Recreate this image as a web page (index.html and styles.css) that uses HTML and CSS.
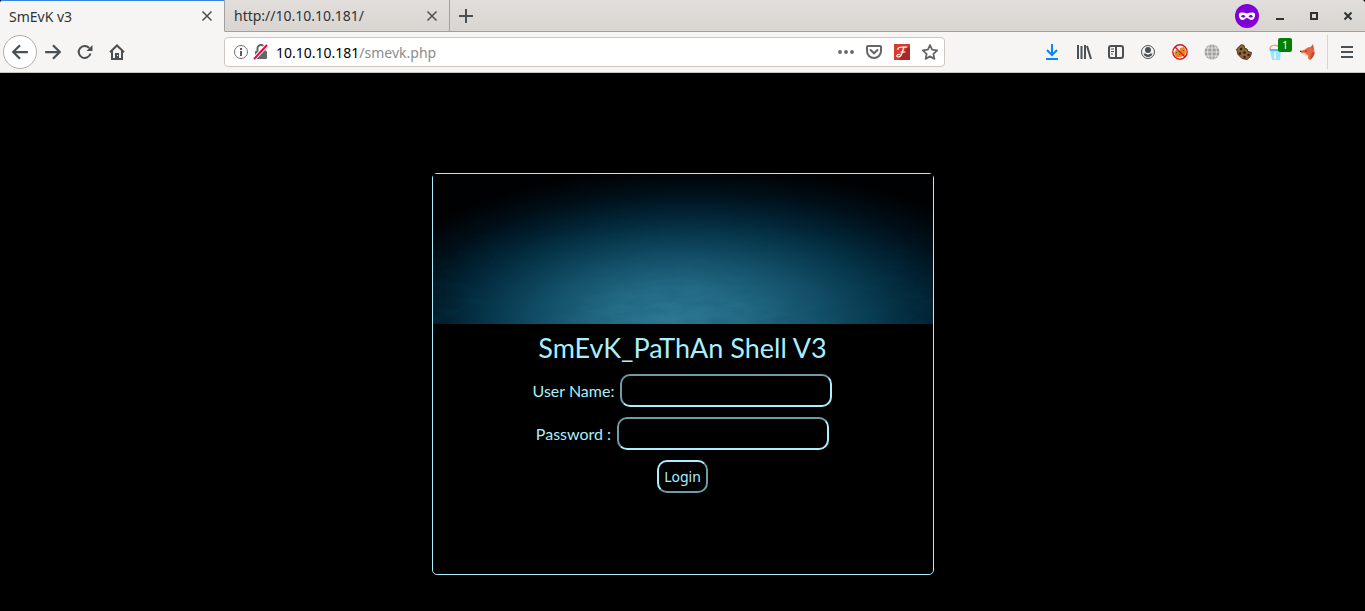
FILE: index.html
```html
<!DOCTYPE html>
<html lang="en">
<head>
<meta charset="utf-8">
<title>SmEvK v3</title>
<link rel="stylesheet" href="styles.css">
</head>
<body>
<header class="browser">
  <div class="tabbar">
    <div class="tab tab-active">
      <span class="tab-title">SmEvK v3</span>
      <button class="tab-close" aria-label="Close tab"><svg width="16" height="16" viewBox="0 0 16 16"><path d="M3.500 3.500l9 9M12.500 3.500l-9 9"/></svg></button>
    </div>
    <div class="tab">
      <span class="tab-title">http://10.10.10.181/</span>
      <button class="tab-close" aria-label="Close tab"><svg width="16" height="16" viewBox="0 0 16 16"><path d="M3.500 3.500l9 9M12.500 3.500l-9 9"/></svg></button>
    </div>
    <button class="new-tab" aria-label="New tab"><svg width="16" height="16" viewBox="0 0 16 16"><path d="M8 1v14M1 8h14"/></svg></button>
    <div class="window-controls">
      <svg class="mask" width="24" height="24" viewBox="0 0 24 24"><circle cx="12" cy="12" r="12" fill="#8000d7"/><path fill="#fff" fill-rule="evenodd" d="M4 9.500C5 8 9 8 12 9.500 15 8 19 8 20 9.500 20.500 13 19 16 16.500 16 14.500 16 13.500 14 12 14S9.500 16 7.500 16C5 16 3.500 13 4 9.500ZM6 12.500C7 14 9.500 14 10.500 12.500 9.500 10.500 7 10.500 6 12.500ZM13.500 12.500C14.500 14 17 14 18 12.500 17 10.500 14.500 10.500 13.500 12.500Z"/></svg>
      <button aria-label="Minimize"><svg width="16" height="16" viewBox="0 0 16 16"><path d="M4 11h8"/></svg></button>
      <button aria-label="Maximize"><svg width="16" height="16" viewBox="0 0 16 16"><path d="M5 5h6v6H5z"/></svg></button>
      <button aria-label="Close window"><svg width="16" height="16" viewBox="0 0 16 16"><path d="M4.500 4.500l7 7M11.500 4.500l-7 7"/></svg></button>
    </div>
  </div>
  <div class="toolbar">
    <nav class="nav-buttons">
      <button class="back" aria-label="Back"><svg width="18" height="18" viewBox="0 0 16 16"><path d="M15 8H2M8 2L2 8l6 6"/></svg></button>
      <button aria-label="Forward"><svg width="18" height="18" viewBox="0 0 16 16"><path d="M1 8h13M8 2l6 6-6 6"/></svg></button>
      <button aria-label="Reload"><svg width="16" height="16" viewBox="0 0 16 16"><path d="M13.500 9.500A6 6 0 1 1 12.200 4"/><path class="solid" d="M15.500 1v6h-6z"/></svg></button>
      <button aria-label="Home"><svg width="16" height="16" viewBox="0 0 16 16"><path d="M1 8.200L8 1.500l7 6.700M3 7v8h10V7"/><path class="solid" fill-rule="evenodd" d="M6 15V9h4v6zM8 11v1h1v-1z"/></svg></button>
    </nav>
    <div class="urlbar">
      <svg width="16" height="16" viewBox="0 0 16 16"><circle cx="8" cy="8" r="6.500" fill="none" stroke="#737373"/><path fill="#5a5a5a" d="M7 4h2v2H7zM7 7h2v5H7z"/></svg>
      <svg width="16" height="16" viewBox="0 0 16 16"><path d="M4.500 7V4.500a3.500 3.500 0 0 1 7 0V7" fill="none" stroke="#666" stroke-width="2"/><rect x="2" y="7" width="12" height="8" rx="1" fill="#666"/><path d="M1 15L14 1" stroke="#fff" stroke-width="4"/><path d="M1 15L14 1" stroke="#ff0039" stroke-width="2"/></svg>
      <span class="url"><span class="host">10.10.10.181</span>/smevk.php</span>
      <div class="page-actions">
        <button aria-label="Page actions"><svg width="16" height="16" viewBox="0 0 16 16"><g fill="#666"><circle cx="2" cy="8" r="1.900"/><circle cx="8" cy="8" r="1.900"/><circle cx="14" cy="8" r="1.900"/></g></svg></button>
        <button aria-label="Save to Pocket"><svg width="16" height="16" viewBox="0 0 16 16" fill="none" stroke="#666" stroke-width="2"><path d="M2 2h12a1 1 0 0 1 1 1v4A7 7 0 0 1 1 7V3a1 1 0 0 1 1-1Z"/><path d="M4.500 6L8 9.300 11.500 6" stroke-linecap="round"/></svg></button>
        <button aria-label="Flash"><svg width="16" height="16" viewBox="0 0 16 16"><path fill="#d63b31" d="M0 0h16v16H0z"/><path fill="#a82a28" d="M14 2l2 2v12H5z"/><path d="M4 6C3 2 8 3.500 13.500 3M10 3C8 8 8 13 4.500 13S3.500 9.500 6 10.500M6.500 8h5" fill="none" stroke="#fff" stroke-width="1.200"/></svg></button>
        <button aria-label="Bookmark"><svg width="16" height="16" viewBox="0 0 16 16"><path d="M8 1l2.100 4.700 5.100.6-3.800 3.500 1 5.100L8 12.400l-4.400 2.500 1-5.100L.8 6.300l5.100-.6z" fill="none" stroke="#666" stroke-width="1.800" stroke-linejoin="round"/></svg></button>
      </div>
    </div>
    <div class="extensions">
      <button aria-label="Downloads"><svg width="16" height="16" viewBox="0 0 16 16" fill="none" stroke="#0a84ff" stroke-width="2"><path d="M8 0v11M3 6l5 5 5-5M2 15h12"/></svg></button>
      <button aria-label="Library"><svg width="16" height="16" viewBox="0 0 16 16" fill="none" stroke="#4a5053" stroke-width="2"><path d="M2 1v14M5.500 2v13M9 1v14M11 2l4 13"/></svg></button>
      <button aria-label="Sidebars"><svg width="16" height="16" viewBox="0 0 16 16" fill="none" stroke="#4a5053" stroke-width="2"><rect x="1" y="2" width="14" height="12" rx="2"/><path d="M8 2v12"/><path d="M3 5h3M3 7.500h3M3 10h2" stroke-width="1"/></svg></button>
      <button aria-label="Account"><svg width="16" height="16" viewBox="0 0 16 16"><circle cx="8" cy="8" r="6.500" fill="none" stroke="#4a5053"/><circle cx="8" cy="6" r="3" fill="#4a5053"/><path fill="#4a5053" d="M3.500 9.500h2C7 11 9 11 10.500 9.500h2C12 14 4 14 3.500 9.500Z"/></svg></button>
      <button aria-label="Cookie blocker"><svg width="16" height="16" viewBox="0 0 16 16"><path fill="#e98620" d="M2 9l2-3 4 1 0-3 4-1 2 4-1 4-4 2-5 0z"/><path fill="#7a4616" d="M7 10h1v1H7zM4 8h1v1H4zM11 6h1v1h-1z"/><circle cx="8" cy="8" r="7.200" fill="none" stroke="#d4191c" stroke-width="1.400"/><path d="M3 3l10 10" stroke="#d4191c" stroke-width="1.400"/></svg></button>
      <button aria-label="Proxy"><svg width="16" height="16" viewBox="0 0 16 16"><circle cx="8" cy="8" r="7.500" fill="#9e9e9e"/><path d="M8 0v16M0 8h16M1.500 4h13M1.500 12h13M5.500 1C3 5 3 11 5.500 15M10.500 1c2.500 4 2.500 10 0 14" fill="none" stroke="#eee" stroke-width=".8"/></svg></button>
      <button aria-label="Cookie manager"><svg width="16" height="16" viewBox="0 0 16 16"><path fill="#8f6437" stroke="#503719" d="M5 .8l3 .5.500 3L11 5l1 2.500 3.500 1-1 4-3.500 3-5-1-4-4L.6 5z"/><g fill="#30200f"><circle cx="5" cy="5" r="1.300"/><circle cx="4" cy="9.500" r="1.300"/><circle cx="8.500" cy="8.500" r="1.300"/><circle cx="8.500" cy="13" r="1.200"/><circle cx="12.500" cy="11" r="1.200"/></g></svg></button>
      <button class="bucket" aria-label="Cleaner, 1"><svg width="16" height="16" viewBox="0 0 16 16"><path d="M2 6C2 0 10 0 12 5" fill="none" stroke="#e6a68a" stroke-width="1.500"/><path fill="#9ce4fb" d="M2 6h11l-1 10H4z"/><path fill="#50bce9" d="M2 5h11v2H2z"/><path fill="#d5f5ff" d="M6 8h2v7H6z"/></svg><span class="badge">1</span></button>
      <button aria-label="Fox extension"><svg width="16" height="16" viewBox="0 0 16 16"><path fill="#e8653f" d="M.5 7L5 5.500 7.500 3.500 10.500 3 13 0l1 5 .8 4-1.800 4-3 3-2-1.500.3-3L4.500 11 1 9z"/><path fill="#f7d9cc" d="M1 8.500l4 .5 2.500 2-4-.3z"/><path fill="#c04a2f" d="M11.500 3.500L12.700 1.800 13 5zM12 8l2.500 1-1.500 4-3 3z"/><path fill="#38231e" d="M0 6.800h1.300v1.300H0zM5.500 6.500h1.200v1H5.500z"/></svg></button>
      <button class="menu" aria-label="Menu"><svg width="16" height="16" viewBox="0 0 16 16" stroke="#4a5053" stroke-width="2"><path d="M2 3h12M2 8h12M2 13h12"/></svg></button>
    </div>
  </div>
</header>
<main class="page">
  <form class="login">
    <svg class="banner" viewBox="0 0 500 150" preserveAspectRatio="none" aria-hidden="true">
      <defs>
        <radialGradient id="glow" gradientUnits="userSpaceOnUse" cx="0" cy="0" r="1" fx="-.08" fy="0" gradientTransform="translate(265 145) scale(345 152)">
          <stop offset="0" stop-color="#2e7893"/><stop offset=".2" stop-color="#246b86"/><stop offset=".4" stop-color="#145069"/><stop offset=".56" stop-color="#08384d"/><stop offset=".7" stop-color="#022233"/><stop offset=".84" stop-color="#000f18"/><stop offset="1" stop-color="#000102"/>
        </radialGradient>
        <filter id="grain" x="0" y="0" width="100%" height="100%"><feTurbulence type="fractalNoise" baseFrequency=".04 .12" numOctaves="4" seed="4"/><feColorMatrix values="0 0 0 0 0  0 0 0 0 .08  0 0 0 0 .12  .9 0 0 0 -.36"/></filter>
        <linearGradient id="fade" x1="0" y1="0" x2="0" y2="1"><stop offset=".3" stop-color="#000"/><stop offset="1" stop-color="#fff"/></linearGradient>
        <mask id="floor"><rect width="500" height="150" fill="url(#fade)"/></mask>
      </defs>
      <rect width="500" height="150" fill="url(#glow)"/>
      <g mask="url(#floor)"><rect width="500" height="150" filter="url(#grain)" opacity=".5"/></g>
    </svg>
    <h1>SmEvK_PaThAn Shell V3</h1>
    <div class="field"><label for="user">User Name:</label><input id="user" type="text"></div>
    <div class="field"><label for="pass">Password :</label><input id="pass" type="password"></div>
    <button class="submit" type="submit">Login</button>
  </form>
</main>
</body>
</html>
```
FILE: styles.css
```css
* { box-sizing: border-box; }
body {
  margin: 0;
  min-height: 100vh;
  display: flex;
  flex-direction: column;
  background: #000;
  font-family: "Noto Sans", sans-serif;
  font-size: 14px;
}
button {
  display: flex;
  align-items: center;
  justify-content: center;
  padding: 0;
  border: 0;
  background: none;
  font: inherit;
}
svg { display: block; flex: none; }

.browser { color: #2e3436; background: #f6f5f4; border-bottom: 1px solid #c9c5c0; border-radius: 4px 4px 0 0; }
.tabbar {
  display: flex;
  height: 32px;
  background: linear-gradient(#e1dedb, #d9d5d1);
  border-radius: 4px 4px 0 0;
  border-bottom: 1px solid #a3a09c;
}
.tab {
  display: flex;
  align-items: center;
  justify-content: space-between;
  width: 225px;
  height: 32px;
  padding: 0 9px;
  border-right: 1px solid #a3a09c;
  border-bottom: 1px solid #a3a09c;
}
.tab-active {
  background: #f6f5f4;
  border-top: 1px solid #3584e4;
  border-bottom-color: #f6f5f4;
  border-radius: 3px 0 0 0;
}
.tab-close svg, .new-tab svg { fill: none; stroke: #4a5053; stroke-width: 2; }
.tab-close svg { stroke-width: 1.5; }
.new-tab { width: 32px; height: 31px; }
.window-controls { display: flex; align-items: center; gap: 18px; margin-left: auto; padding-right: 9px; }
.window-controls svg { fill: none; stroke: #2e3436; stroke-width: 2; }
.window-controls .mask { margin-right: -5px; stroke: none; }

.toolbar { display: flex; align-items: center; height: 40px; }
.nav-buttons { display: flex; align-items: center; width: 224px; padding-left: 3px; }
.nav-buttons button { width: 32px; height: 32px; }
.nav-buttons svg { fill: none; stroke: #4a5053; stroke-width: 2; }
.nav-buttons .solid { fill: #4a5053; stroke: none; }
.nav-buttons .back { width: 34px; height: 34px; border: 1px solid #b1aeab; border-radius: 50%; background: #fff; }
.urlbar {
  display: flex;
  align-items: center;
  flex: 0 1 721px;
  height: 30px;
  gap: 4px;
  padding: 0 6px 0 8px;
  border: 1px solid #cdc7c2;
  border-radius: 4px;
  background: #fff;
}
.url { margin-left: 3px; color: #8c8c8c; white-space: nowrap; }
.host { color: #000; }
.page-actions { display: flex; gap: 12px; margin-left: auto; }
.extensions { display: flex; align-items: center; gap: 16px; margin-left: auto; padding-right: 10px; }
.bucket { position: relative; }
.badge {
  position: absolute;
  left: 10px;
  top: -6px;
  width: 14px;
  height: 14px;
  border-radius: 2px;
  background: #008000;
  color: #fff;
  font-size: 10px;
  line-height: 14px;
}
.menu { height: 34px; padding-left: 11px; margin-left: -5px; border-left: 1px solid #d8d5d1; }

.page { flex: 1; padding: 100px 16px 36px; }
.login {
  display: flex;
  flex-direction: column;
  align-items: center;
  max-width: 502px;
  min-height: 402px;
  margin: 0 auto;
  border: 1px solid #aaeeff;
  border-radius: 5px;
  color: #aaeeff;
  font-family: Lato, sans-serif;
  font-size: 16px;
}
.banner { width: 100%; height: 150px; }
h1 { margin: 8px 0 10px; font-size: 27px; line-height: 32px; font-weight: 400; }
.field { display: flex; align-items: center; gap: 6px; margin-bottom: 10px; }
.field input {
  width: 212px;
  height: 33px;
  padding: 5px;
  border: 2px solid;
  border-color: #6c9ca7 #aaeeff #aaeeff #6c9ca7;
  border-radius: 10px;
  background: #000;
  color: #aaeeff;
}
.submit {
  height: 33px;
  padding: 0 5px;
  border: 2px solid;
  border-color: #aaeeff #6c9ca7 #6c9ca7 #aaeeff;
  border-radius: 10px;
  background: #000;
  color: #aaeeff;
  font-family: "Noto Sans", sans-serif;
  font-size: 14px;
}
```
